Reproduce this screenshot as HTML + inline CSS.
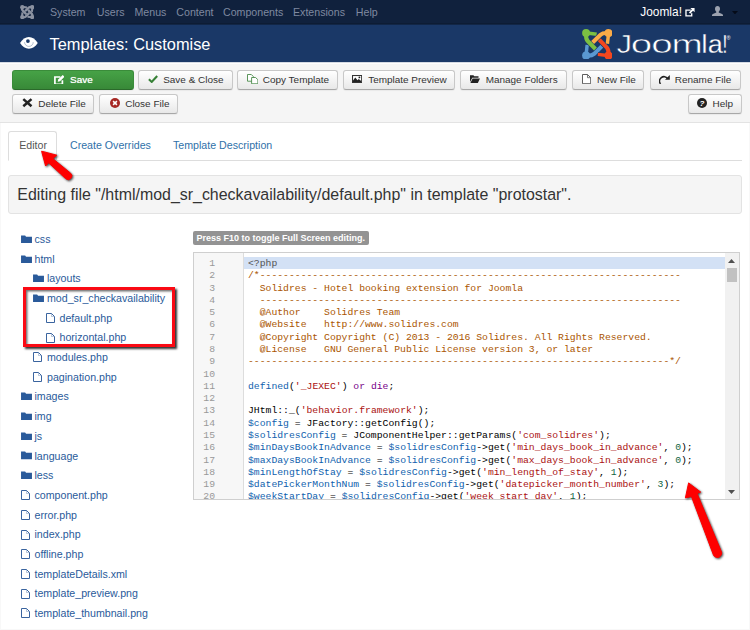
<!DOCTYPE html>
<html><head><meta charset="utf-8"><title>Templates: Customise</title>
<style>
*{box-sizing:border-box;margin:0;padding:0}
html,body{width:750px;height:630px;overflow:hidden;background:#fff}
#frame{left:0;top:123px;width:750px;height:507px;border:1px solid #f8f8f8;border-top:0}
body{position:relative;font-family:"Liberation Sans",Arial,sans-serif;font-size:11px;color:#333}
.abs{position:absolute}
#nav{left:0;top:0;width:750px;height:25px;background:#10213d;border-bottom:1px solid #122646;box-shadow:inset 0 -1px 0 #0d1c34}
.mi{position:absolute;top:5.5px;font-size:10.64px;line-height:13px;color:#7f89a0;white-space:nowrap}
#hdr{left:0;top:25px;width:750px;height:37px;background:#1a3867}
#title{left:49.5px;top:34px;font-size:16.37px;line-height:20px;color:#fff;white-space:nowrap}
#tb{left:0;top:62px;width:750px;height:61px;background:#f5f5f5;border-top:1px solid #d5dae3;box-shadow:inset 0 1px 0 #fdfdfd;border-bottom:1px solid #e3e3e3}
.btn{position:absolute;height:20px;border:1px solid #bbb;border-color:#c8c8c8 #c8c8c8 #a8a8a8;border-radius:3px;background:linear-gradient(#ffffff,#e8e8e8);font-size:9.96px;line-height:18px;color:#333;white-space:nowrap;box-shadow:0 1px 1px rgba(0,0,0,.05)}
.btn span{position:absolute;top:0}
.btn i{position:absolute;top:4px;line-height:0}
.btn.g{background:linear-gradient(#46a246,#388938);border-color:#3a8c3a #3a8c3a #2b6a2b;color:#fff;text-shadow:0 0 .7px rgba(255,255,255,.85)}
.tab{position:absolute;top:138.5px;font-size:10.64px;line-height:13px;color:#3071a9;white-space:nowrap}
#tabline{left:8px;top:160px;width:734px;height:1px;background:#ddd}
#tabact{left:8px;top:131px;width:49px;height:30px;border:1px solid #ddd;border-bottom-color:#fff;border-radius:3px 3px 0 0;background:#fff}
#well{left:8px;top:175px;width:734px;height:38.6px;background:#f5f5f5;border:1px solid #e3e3e3;border-radius:3px}
#well span{position:absolute;left:8.3px;top:8px;font-size:15.95px;line-height:21px;color:#333;white-space:nowrap}
.tr{position:absolute;font-size:10.64px;line-height:13px;color:#2a5a9a;white-space:nowrap}
.ic{position:absolute}
#f10{left:193px;top:230.7px;width:175.5px;height:14px;background:#939393;border-radius:2px;color:#fff;font-size:9px;font-weight:bold;line-height:14px;padding-left:3.5px;white-space:nowrap}
#ed{left:193px;top:252px;width:546.5px;height:248px;border:1px solid #cfcfcf;background:#fff;overflow:hidden}
#gut{position:absolute;left:0;top:0;width:49.5px;height:100%;background:#f7f7f7;border-right:1px solid #ddd}
#actl{position:absolute;left:49.5px;top:4px;width:482.5px;height:12px;background:#d3e1f5}
#sb{position:absolute;right:0;top:0;width:14px;height:100%;background:#f1f1f1}
pre{position:absolute;font-family:"Liberation Mono",monospace;font-size:9.755px;line-height:12.28px;white-space:pre}
#ln{left:0;top:5px;width:21px;text-align:right;color:#999}
#code{left:54px;top:5px;color:#000}
.c{color:#a50}.v{color:#0f5fae}.s{color:#a11}.k{color:#708}.n{color:#164}.m{color:#555}
</style></head><body>
<div id="nav" class="abs">
<span class="mi" style="left:50px">System</span>
<span class="mi" style="left:96.8px">Users</span>
<span class="mi" style="left:134.5px">Menus</span>
<span class="mi" style="left:176.3px">Content</span>
<span class="mi" style="left:223px">Components</span>
<span class="mi" style="left:293px">Extensions</span>
<span class="mi" style="left:355.8px">Help</span>
<span class="mi" style="left:640.3px;top:4.5px;color:#fff;font-size:11.9px;line-height:14px">Joomla!</span>
<svg class="ic" style="left:20.1px;top:4.6px" width="14.4" height="14.2" viewBox="0 0 30 30"><g transform="rotate(0 15 15)" fill="none"><path d="M10.4 13.2L18.2 5.6Q20.6 3.5 25.5 4" stroke="#8a91a0" stroke-width="5"/><path d="M26 5L24.9 14.4" stroke="#8a91a0" stroke-width="4.4"/><circle cx="25.5" cy="4.5" r="4.5" fill="#8a91a0"/></g><g transform="rotate(90 15 15)" fill="none"><path d="M10.4 13.2L18.2 5.6Q20.6 3.5 25.5 4" stroke="#8a91a0" stroke-width="5"/><path d="M26 5L24.9 14.4" stroke="#8a91a0" stroke-width="4.4"/><circle cx="25.5" cy="4.5" r="4.5" fill="#8a91a0"/></g><g transform="rotate(180 15 15)" fill="none"><path d="M10.4 13.2L18.2 5.6Q20.6 3.5 25.5 4" stroke="#8a91a0" stroke-width="5"/><path d="M26 5L24.9 14.4" stroke="#8a91a0" stroke-width="4.4"/><circle cx="25.5" cy="4.5" r="4.5" fill="#8a91a0"/></g><g transform="rotate(-90 15 15)" fill="none"><path d="M10.4 13.2L18.2 5.6Q20.6 3.5 25.5 4" stroke="#8a91a0" stroke-width="5"/><path d="M26 5L24.9 14.4" stroke="#8a91a0" stroke-width="4.4"/><circle cx="25.5" cy="4.5" r="4.5" fill="#8a91a0"/></g></svg>
<svg class="ic" style="left:685.2px;top:8px" width="9.6" height="8.600" viewBox="0 0 10 9"><path d="M6 2.2H1v6h6V5.5" fill="none" stroke="#fff" stroke-width="1.4"/><path d="M5.6 0H10v4.4L8.4 2.9 5.4 5.9 4.1 4.6l3-3z" fill="#fff"/></svg>
<svg class="ic" style="left:712.2px;top:6.2px" width="11" height="10" viewBox="0 0 11 10"><path d="M5.5 0c1.6 0 2.5 1.2 2.5 2.8 0 1.300-.6 2.400-1.300 3v.8l3.400 1.500c.5.2.9.700.9 1.200V10H0v-.7c0-.5.400-1 .9-1.200l3.400-1.500v-.8C3.600 5.200 3 4.100 3 2.800 3 1.200 3.900 0 5.500 0z" fill="#9ca2af"/></svg>
<svg class="ic" style="left:731.7px;top:11px" width="6" height="3.4" viewBox="0 0 6 3.4"><path d="M0 0h6L3 3.400z" fill="#050b18"/></svg>
</div>
<div id="hdr" class="abs"></div>
<svg class="ic" style="left:20px;top:36.8px" width="17.8" height="11.8" viewBox="0 0 18 12"><path d="M0 6.2C2.4 2.2 5.5 0 9 0s6.600 2.200 9 6.200C15.600 9.900 12.500 12 9 12S2.400 9.900 0 6.200z" fill="#fff"/><path d="M4.600 5.200a4.400 4.400 0 0 0 8.800 0" fill="none" stroke="#1a3867" stroke-width=".8" opacity=".4"/><circle cx="8" cy="4.100" r="1.900" fill="#1a3867"/></svg>
<svg class="ic" style="left:581.5px;top:28.8px" width="30.6" height="30.6" viewBox="0 0 30 30"><g transform="rotate(180 15 15)" fill="none"><path d="M10.4 13.2L18.2 5.6Q20.6 3.5 25.5 4" stroke="#1a3867" stroke-width="5.2"/><path d="M26 5L24.9 14.4" stroke="#1a3867" stroke-width="4.6"/><circle cx="26" cy="4" r="4.5" fill="#1a3867"/><path d="M10.4 13.2L18.2 5.6Q20.6 3.5 25.5 4" stroke="#5a98d2" stroke-width="4"/><path d="M26 5L24.9 14.4" stroke="#5a98d2" stroke-width="3.4"/><circle cx="26" cy="4" r="3.9" fill="#5a98d2"/></g><g transform="rotate(-90 15 15)" fill="none"><path d="M10.4 13.2L18.2 5.6Q20.6 3.5 25.5 4" stroke="#1a3867" stroke-width="5.2"/><path d="M26 5L24.9 14.4" stroke="#1a3867" stroke-width="4.6"/><circle cx="26" cy="4" r="4.5" fill="#1a3867"/><path d="M10.4 13.2L18.2 5.6Q20.6 3.5 25.5 4" stroke="#7cbf42" stroke-width="4"/><path d="M26 5L24.9 14.4" stroke="#7cbf42" stroke-width="3.4"/><circle cx="26" cy="4" r="3.9" fill="#7cbf42"/></g><g transform="rotate(90 15 15)" fill="none"><path d="M10.4 13.2L18.2 5.6Q20.6 3.5 25.5 4" stroke="#1a3867" stroke-width="5.2"/><path d="M26 5L24.9 14.4" stroke="#1a3867" stroke-width="4.6"/><circle cx="26" cy="4" r="4.5" fill="#1a3867"/><path d="M10.4 13.2L18.2 5.6Q20.6 3.5 25.5 4" stroke="#f4471f" stroke-width="4"/><path d="M26 5L24.9 14.4" stroke="#f4471f" stroke-width="3.4"/><circle cx="26" cy="4" r="3.9" fill="#f4471f"/></g><g transform="rotate(0 15 15)" fill="none"><path d="M10.4 13.2L18.2 5.6Q20.6 3.5 25.5 4" stroke="#1a3867" stroke-width="5.2"/><path d="M26 5L24.9 14.4" stroke="#1a3867" stroke-width="4.6"/><circle cx="26" cy="4" r="4.5" fill="#1a3867"/><path d="M10.4 13.2L18.2 5.6Q20.6 3.5 25.5 4" stroke="#fbab47" stroke-width="4"/><path d="M26 5L24.9 14.4" stroke="#fbab47" stroke-width="3.4"/><circle cx="26" cy="4" r="3.9" fill="#fbab47"/></g></svg>
<svg class="ic" style="left:610px;top:26px" width="135" height="34" viewBox="0 0 135 34"><g font-family="Liberation Sans, sans-serif" font-size="25.6" fill="#fff" stroke="#1a3867"><text transform="translate(6.47 26.5) scale(1.220 1)" stroke-width="0.5">J</text><text transform="translate(20.65 26.5) scale(1.503 1)" stroke-width="0.5">o</text><text transform="translate(41.15 26.5) scale(1.503 1)" stroke-width="0.5">o</text><text transform="translate(61.52 26.5) scale(1.468 1)" stroke-width="0.5">m</text><text transform="translate(91.54 26.5) scale(1.042 1)" stroke-width="0.25">l</text><text transform="translate(97.72 26.5) scale(1.060 1)" stroke-width="0.25">a</text><text transform="translate(112.35 26.5) scale(0.742 1)" stroke-width="0.25">!</text></g><text x="116.4" y="13.6" font-family="Liberation Sans, sans-serif" font-size="5.5" fill="#fff">®</text></svg>
<div id="title" class="abs">Templates: Customise</div>
<div id="tb" class="abs"></div>
<div class="btn g" style="left:12px;top:70px;width:122px"><i style="left:41px;top:3.8px"><svg width="10.4" height="9.2" viewBox="0 0 10.400 9.200"><path d="M6.400 2H.9v7.300h7.500V5.200" fill="none" stroke="#fff" stroke-width="1.700"/><path d="M3.700 6.800l.5-2.300L8.700 0l1.800 1.800L6 6.300z" fill="#fff"/></svg></i><span style="left:57px">Save</span></div>
<div class="btn " style="left:138px;top:70px;width:95px"><i style="left:8.5px;top:4.2px"><svg width="10" height="7.8" viewBox="0 0 10 7.800"><path d="M.9 4.300l2.800 2.600L9.200 1" fill="none" stroke="#378137" stroke-width="2.100"/></svg></i><span style="left:24.2px">Save &amp; Close</span></div>
<div class="btn " style="left:237px;top:70px;width:101px"><i style="left:8.5px;top:3.2px"><svg width="11.4" height="10.2" viewBox="0 0 11.400 10.200"><path d="M.5.5h3.800l2 2v4.700H.5z" fill="#fff" stroke="#4a8a4a" stroke-width=".9"/><path d="M4.600 3.500h4l2.300 2.300v4H4.600z" fill="#fff" stroke="#4a8a4a" stroke-width=".9"/></svg></i><span style="left:24.8px">Copy Template</span></div>
<div class="btn " style="left:343px;top:70px;width:112px"><i style="left:8px;top:4px"><svg width="10.2" height="8" viewBox="0 0 10.200 8"><rect x=".5" y=".5" width="9.200" height="7" fill="#fff" stroke="#333" stroke-width="1.100"/><path d="M1 7V5.600l2.300-3 2.200 2.600 1.300-1.200L9.200 6v1z" fill="#222"/><circle cx="7.400" cy="2.400" r=".9" fill="#222"/></svg></i><span style="left:24.2px">Template Preview</span></div>
<div class="btn " style="left:460px;top:70px;width:107px"><i style="left:9px;top:4.2px"><svg width="10" height="8" viewBox="0 0 10 8"><path d="M0 .3h3.400l.9 1h4.200v1.500H2.300L0 7z" fill="#222"/><path d="M2.600 3.500H10L7.800 8H.4z" fill="#222"/></svg></i><span style="left:24.7px">Manage Folders</span></div>
<div class="btn " style="left:572px;top:70px;width:72px"><i style="left:9.2px;top:3.2px"><svg width="9.2" height="10.2" viewBox="0 0 9.200 10.200"><path d="M.5.500h5L8.700 3.700v6H.5z" fill="#fff" stroke="#555" stroke-width=".95"/><path d="M5.500.6v3.100h3.100" fill="none" stroke="#555" stroke-width=".8"/></svg></i><span style="left:24px">New File</span></div>
<div class="btn " style="left:650px;top:70px;width:91px"><i style="left:8px;top:3.6px"><svg width="11" height="9" viewBox="0 0 11 9"><path d="M1.500 8.900A4.300 4.300 0 0 1 8.600 3.400" fill="none" stroke="#222" stroke-width="1.600"/><path d="M10.800 0v4.800H6z" fill="#222"/></svg></i><span style="left:23.8px">Rename File</span></div>
<div class="btn " style="left:12px;top:94px;width:82px"><i style="left:9px;top:3.2px"><svg width="10.8" height="9.4" viewBox="0 0 10.800 9.400"><path d="M1.300 1.100l8.200 7.200M9.500 1.100L1.300 8.300" stroke="#222" stroke-width="2.500"/></svg></i><span style="left:25.2px">Delete File</span></div>
<div class="btn " style="left:99px;top:94px;width:79px"><i style="left:9.8px;top:3px"><svg width="10" height="10" viewBox="0 0 10 10"><circle cx="5" cy="5" r="5" fill="#a62824"/><path d="M3.100 3.100l3.800 3.800M6.900 3.100L3.100 6.900" stroke="#fff" stroke-width="1.500"/></svg></i><span style="left:25.2px">Close File</span></div>
<div class="btn " style="left:688px;top:94px;width:54px"><i style="left:8.1px;top:3px"><svg width="10" height="10" viewBox="0 0 10 10"><circle cx="5" cy="5" r="5" fill="#222"/><text x="5" y="8" font-family="Liberation Sans, sans-serif" font-weight="bold" font-size="8" fill="#fff" text-anchor="middle">?</text></svg></i><span style="left:23.6px">Help</span></div>
<div id="frame" class="abs"></div>
<div id="tabline" class="abs"></div><div id="tabact" class="abs"></div>
<span class="tab" style="left:19.2px;color:#555">Editor</span>
<span class="tab" style="left:70px">Create Overrides</span>
<span class="tab" style="left:173px">Template Description</span>
<div id="well" class="abs"><span>Editing file "/html/mod_sr_checkavailability/default.php" in template "protostar".</span></div>
<svg class="ic" style="left:20.5px;top:234.9px" width="11" height="8.2" viewBox="0 0 12 9"><path d="M0 0.5h4.5l1 1.5H12V9H0z" fill="#2a5a9a"/></svg>
<span class="tr" style="left:34.5px;top:233.0px">css</span>
<svg class="ic" style="left:20.5px;top:254.6px" width="11" height="8.2" viewBox="0 0 12 9"><path d="M0 0.5h4.5l1 1.5H12V9H0z" fill="#2a5a9a"/></svg>
<span class="tr" style="left:34.5px;top:252.7px">html</span>
<svg class="ic" style="left:33.0px;top:274.3px" width="11" height="8.2" viewBox="0 0 12 9"><path d="M0 0.5h4.5l1 1.5H12V9H0z" fill="#2a5a9a"/></svg>
<span class="tr" style="left:47.0px;top:272.4px">layouts</span>
<svg class="ic" style="left:33.0px;top:293.9px" width="11" height="8.2" viewBox="0 0 12 9"><path d="M0 0.5h4.5l1 1.5H12V9H0z" fill="#2a5a9a"/></svg>
<span class="tr" style="left:47.0px;top:292.0px">mod_sr_checkavailability</span>
<svg class="ic" style="left:46px;top:313px" width="9" height="10" viewBox="0 0 9 10"><path d="M.5.5h5l3 3v6h-8z" fill="#fff" stroke="#3a649f" stroke-width="1"/><path d="M5.500.5v3h3" fill="none" stroke="#3a649f" stroke-width=".6" opacity=".6"/></svg>
<span class="tr" style="left:59.5px;top:311.7px">default.php</span>
<svg class="ic" style="left:46px;top:333px" width="9" height="10" viewBox="0 0 9 10"><path d="M.5.5h5l3 3v6h-8z" fill="#fff" stroke="#3a649f" stroke-width="1"/><path d="M5.500.5v3h3" fill="none" stroke="#3a649f" stroke-width=".6" opacity=".6"/></svg>
<span class="tr" style="left:59.5px;top:331.4px">horizontal.php</span>
<svg class="ic" style="left:33px;top:352px" width="9" height="10" viewBox="0 0 9 10"><path d="M.5.5h5l3 3v6h-8z" fill="#fff" stroke="#3a649f" stroke-width="1"/><path d="M5.500.5v3h3" fill="none" stroke="#3a649f" stroke-width=".6" opacity=".6"/></svg>
<span class="tr" style="left:47.0px;top:351.1px">modules.php</span>
<svg class="ic" style="left:33px;top:372px" width="9" height="10" viewBox="0 0 9 10"><path d="M.5.5h5l3 3v6h-8z" fill="#fff" stroke="#3a649f" stroke-width="1"/><path d="M5.500.5v3h3" fill="none" stroke="#3a649f" stroke-width=".6" opacity=".6"/></svg>
<span class="tr" style="left:47.0px;top:370.8px">pagination.php</span>
<svg class="ic" style="left:20.5px;top:392.3px" width="11" height="8.2" viewBox="0 0 12 9"><path d="M0 0.5h4.5l1 1.5H12V9H0z" fill="#2a5a9a"/></svg>
<span class="tr" style="left:34.5px;top:390.4px">images</span>
<svg class="ic" style="left:20.5px;top:412.0px" width="11" height="8.2" viewBox="0 0 12 9"><path d="M0 0.5h4.5l1 1.5H12V9H0z" fill="#2a5a9a"/></svg>
<span class="tr" style="left:34.5px;top:410.1px">img</span>
<svg class="ic" style="left:20.5px;top:431.7px" width="11" height="8.2" viewBox="0 0 12 9"><path d="M0 0.5h4.5l1 1.5H12V9H0z" fill="#2a5a9a"/></svg>
<span class="tr" style="left:34.5px;top:429.8px">js</span>
<svg class="ic" style="left:20.5px;top:451.4px" width="11" height="8.2" viewBox="0 0 12 9"><path d="M0 0.5h4.5l1 1.5H12V9H0z" fill="#2a5a9a"/></svg>
<span class="tr" style="left:34.5px;top:449.5px">language</span>
<svg class="ic" style="left:20.5px;top:471.1px" width="11" height="8.2" viewBox="0 0 12 9"><path d="M0 0.5h4.5l1 1.5H12V9H0z" fill="#2a5a9a"/></svg>
<span class="tr" style="left:34.5px;top:469.2px">less</span>
<svg class="ic" style="left:21px;top:490px" width="9" height="10" viewBox="0 0 9 10"><path d="M.5.5h5l3 3v6h-8z" fill="#fff" stroke="#3a649f" stroke-width="1"/><path d="M5.500.5v3h3" fill="none" stroke="#3a649f" stroke-width=".6" opacity=".6"/></svg>
<span class="tr" style="left:34.5px;top:488.8px">component.php</span>
<svg class="ic" style="left:21px;top:510px" width="9" height="10" viewBox="0 0 9 10"><path d="M.5.5h5l3 3v6h-8z" fill="#fff" stroke="#3a649f" stroke-width="1"/><path d="M5.500.5v3h3" fill="none" stroke="#3a649f" stroke-width=".6" opacity=".6"/></svg>
<span class="tr" style="left:34.5px;top:508.5px">error.php</span>
<svg class="ic" style="left:21px;top:530px" width="9" height="10" viewBox="0 0 9 10"><path d="M.5.5h5l3 3v6h-8z" fill="#fff" stroke="#3a649f" stroke-width="1"/><path d="M5.500.5v3h3" fill="none" stroke="#3a649f" stroke-width=".6" opacity=".6"/></svg>
<span class="tr" style="left:34.5px;top:528.2px">index.php</span>
<svg class="ic" style="left:21px;top:549px" width="9" height="10" viewBox="0 0 9 10"><path d="M.5.5h5l3 3v6h-8z" fill="#fff" stroke="#3a649f" stroke-width="1"/><path d="M5.500.5v3h3" fill="none" stroke="#3a649f" stroke-width=".6" opacity=".6"/></svg>
<span class="tr" style="left:34.5px;top:547.9px">offline.php</span>
<svg class="ic" style="left:21px;top:569px" width="9" height="10" viewBox="0 0 9 10"><path d="M.5.5h5l3 3v6h-8z" fill="#fff" stroke="#3a649f" stroke-width="1"/><path d="M5.500.5v3h3" fill="none" stroke="#3a649f" stroke-width=".6" opacity=".6"/></svg>
<span class="tr" style="left:34.5px;top:567.6px">templateDetails.xml</span>
<svg class="ic" style="left:21px;top:589px" width="9" height="10" viewBox="0 0 9 10"><path d="M.5.5h5l3 3v6h-8z" fill="#fff" stroke="#3a649f" stroke-width="1"/><path d="M5.500.5v3h3" fill="none" stroke="#3a649f" stroke-width=".6" opacity=".6"/></svg>
<span class="tr" style="left:34.5px;top:587.2px">template_preview.png</span>
<svg class="ic" style="left:21px;top:608px" width="9" height="10" viewBox="0 0 9 10"><path d="M.5.5h5l3 3v6h-8z" fill="#fff" stroke="#3a649f" stroke-width="1"/><path d="M5.500.5v3h3" fill="none" stroke="#3a649f" stroke-width=".6" opacity=".6"/></svg>
<span class="tr" style="left:34.5px;top:606.9px">template_thumbnail.png</span>
<div id="f10" class="abs">Press F10 to toggle Full Screen editing.</div>
<div id="ed" class="abs"><div id="gut"></div><div id="actl"></div>
<pre id="ln">1
2
3
4
5
6
7
8
9
10
11
12
13
14
15
16
17
18
19
20
21</pre>
<pre id="code"><span class="m">&lt;?php</span>
<span class="c">/*------------------------------------------------------------------------</span>
<span class="c">  Solidres - Hotel booking extension for Joomla</span>
<span class="c">  ------------------------------------------------------------------------</span>
<span class="c">  @Author    Solidres Team</span>
<span class="c">  @Website   http://www.solidres.com</span>
<span class="c">  @Copyright Copyright (C) 2013 - 2016 Solidres. All Rights Reserved.</span>
<span class="c">  @License   GNU General Public License version 3, or later</span>
<span class="c">------------------------------------------------------------------------*/</span>

<span class="v">defined</span>(<span class="s">'_JEXEC'</span>) <span class="k">or</span> <span class="k">die</span>;

JHtml::_(<span class="s">'behavior.framework'</span>);
<span class="v">$config</span> = JFactory::getConfig();
<span class="v">$solidresConfig</span> = JComponentHelper::getParams(<span class="s">'com_solidres'</span>);
<span class="v">$minDaysBookInAdvance</span> = <span class="v">$solidresConfig</span>-&gt;get(<span class="s">'min_days_book_in_advance'</span>, <span class="n">0</span>);
<span class="v">$maxDaysBookInAdvance</span> = <span class="v">$solidresConfig</span>-&gt;get(<span class="s">'max_days_book_in_advance'</span>, <span class="n">0</span>);
<span class="v">$minLengthOfStay</span> = <span class="v">$solidresConfig</span>-&gt;get(<span class="s">'min_length_of_stay'</span>, <span class="n">1</span>);
<span class="v">$datePickerMonthNum</span> = <span class="v">$solidresConfig</span>-&gt;get(<span class="s">'datepicker_month_number'</span>, <span class="n">3</span>);
<span class="v">$weekStartDay</span> = <span class="v">$solidresConfig</span>-&gt;get(<span class="s">'week_start_day'</span>, <span class="n">1</span>);
<span class="v">$dateFormat</span> = <span class="v">$solidresConfig</span>-&gt;get(<span class="s">'date_format'</span>, <span class="s">'d-m-Y'</span>);</pre>
<div id="sb"><b style="position:absolute;left:2px;top:14.500px;width:10px;height:14.500px;background:#c1c1c1"></b><svg class="ic" style="left:3.500px;top:5.500px" width="7" height="4" viewBox="0 0 7 4"><path d="M0 4L3.500 0 7 4z" fill="#505050"/></svg><svg class="ic" style="left:3.500px;top:236.500px" width="7" height="4" viewBox="0 0 7 4"><path d="M0 0h7L3.500 4z" fill="#505050"/></svg></div></div>
<div class="abs" style="left:23.4px;top:287.2px;width:152px;height:59.6px;border:3.3px solid #fa0a14;box-shadow:1.5px 1.5px 2px rgba(0,0,0,.8),inset 1.5px 1.5px 2px rgba(0,0,0,.55)"></div>
<svg class="ic" style="left:0;top:0;filter:drop-shadow(1px 1px 0.8px rgba(0,0,0,.75))" width="750" height="630" viewBox="0 0 750 630"><g fill="#fe0000" stroke="#fe0000" stroke-width="1" stroke-linejoin="round"><path d="M41.600 151.200L56.800 155.200L52.800 158.600L70.600 173.200A3.600 3.600 0 0 1 65.600 178.600L48.600 162.800L45.600 166z"/><path d="M688.600 482.900L700.700 492.100L697.100 493.500L721 550.800A4 4 0 0 1 713.600 555.400L691.400 496.400L685.400 497.900z"/></g></svg>
</body></html>
